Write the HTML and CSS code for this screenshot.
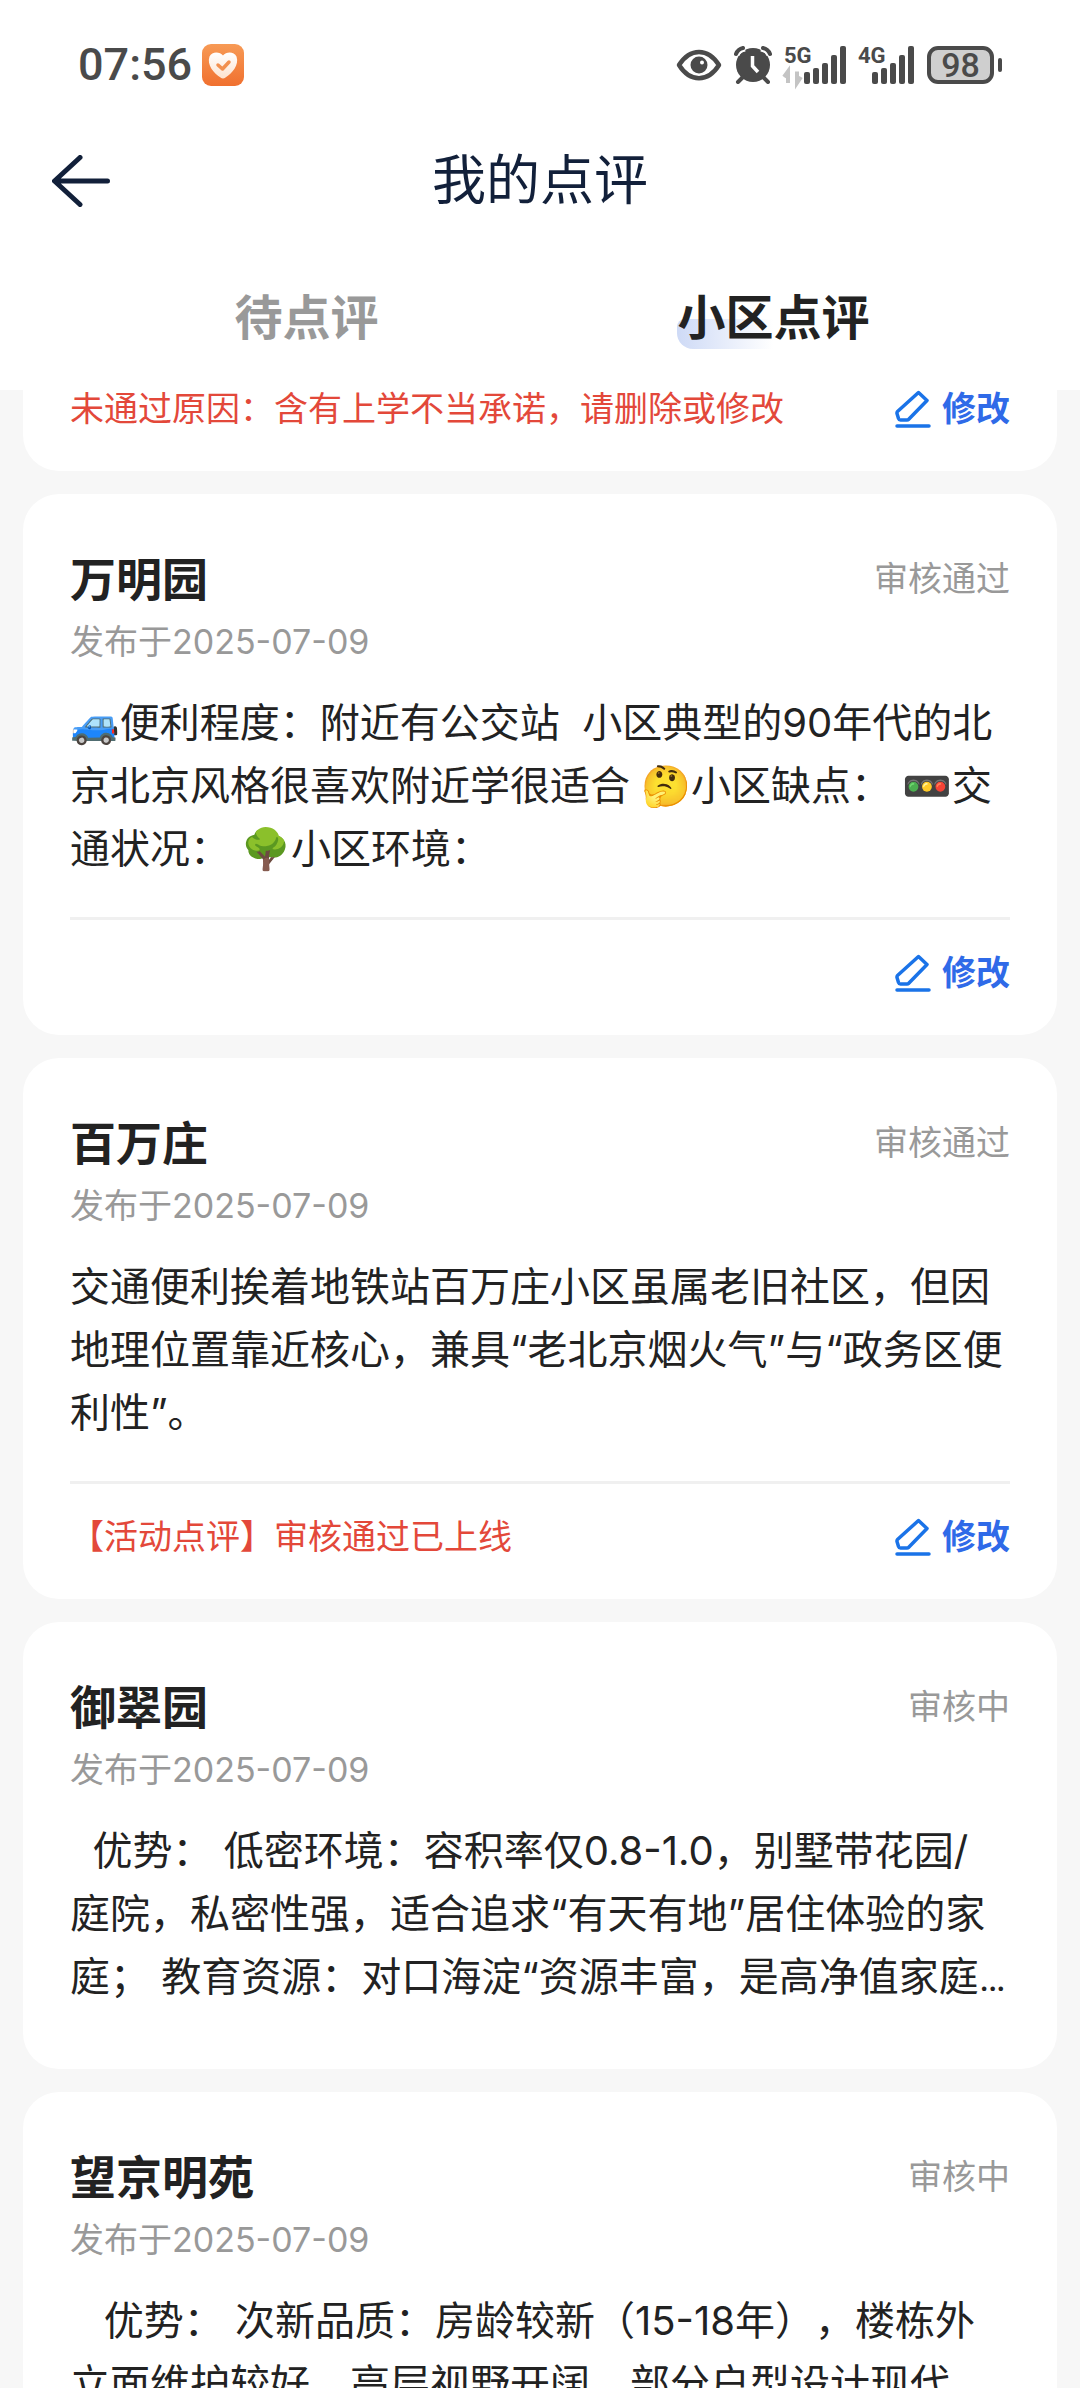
FILE: index.html
```html
<!DOCTYPE html>
<html lang="zh-CN">
<head>
<meta charset="utf-8">
<meta name="viewport" content="width=device-width, initial-scale=1">
<title>我的点评</title>
<link rel="stylesheet" href="styles.css">
</head>
<body>
<svg class="sprite" aria-hidden="true">
  <symbol id="icon-edit" viewBox="0 0 36 38">
    <path d="M23.5 2.5 L32 10.5 L13.5 29.5 Q13 30 12 30 L5.500 30 Q4 30 3.500 28.500 L2 23.500 Q1.800 22.500 2.500 21.500 Z" fill="none" stroke="#1a73e8" stroke-width="3.500" stroke-linejoin="round"/>
    <path d="M2 36 H34" stroke="#1a73e8" stroke-width="3.500" stroke-linecap="round"/>
  </symbol>
</svg>
<div class="app">
  <header class="header">
    <div class="status">
      <div class="status__left">
        <span class="status__time">07:56</span>
        <svg width="42" height="42" viewBox="0 0 42 42" aria-hidden="true">
          <defs>
            <linearGradient id="badge" x1="0" y1="0" x2="0" y2="1"><stop offset="0" stop-color="#f79a55"/><stop offset="1" stop-color="#f0702f"/></linearGradient>
            <linearGradient id="heart" x1="0" y1="0" x2="0" y2="1"><stop offset="0" stop-color="#fff"/><stop offset="1" stop-color="#fde3cf"/></linearGradient>
          </defs>
          <rect width="42" height="42" rx="9" fill="url(#badge)"/>
          <path d="M21 11.500 C18 7.500 10 7 7.500 12.500 C4.500 21 12 29.500 18.500 33.500 Q21 35.500 23.500 33.500 C30 29.500 37.500 21 34.500 12.500 C32 7 24 7.500 21 11.500 Z" fill="url(#heart)"/>
          <path d="M16 21 L20.500 25 L27 18" fill="none" stroke="#f2904f" stroke-width="3.500" stroke-linecap="round" stroke-linejoin="round"/>
        </svg>
      </div>
      <div class="status__right">
        <svg width="46" height="38" viewBox="0 0 46 38" aria-hidden="true">
          <path d="M3 19 C14 1.500 32 1.500 43 19 C32 36.500 14 36.500 3 19 Z" fill="none" stroke="#4a4a4a" stroke-width="4.500" stroke-linejoin="round"/>
          <circle cx="23" cy="19" r="8.500" fill="#4a4a4a"/>
          <circle cx="26" cy="16.500" r="2" fill="#fff"/>
        </svg>
        <svg width="38" height="38" viewBox="0 0 38 38" aria-hidden="true">
          <circle cx="19" cy="19" r="17" fill="#4a4a4a"/>
          <path d="M9 31 L4 36 M29 31 L34 36" stroke="#4a4a4a" stroke-width="4" stroke-linecap="round"/>
          <path d="M2 9 Q4 3 11 2 M36 9 Q34 3 27 2" fill="none" stroke="#fff" stroke-width="7"/>
          <path d="M2 8 Q4 3 9 2 M36 8 Q34 3 29 2" fill="none" stroke="#4a4a4a" stroke-width="4" stroke-linecap="round"/>
          <path d="M18.500 10 V20 L24 26" fill="none" stroke="#fff" stroke-width="3.500"/>
        </svg>
        <svg class="signal" width="62" height="38" viewBox="0 0 62 38" role="img" aria-label="5G">
          <text x="0" y="17" class="signal__net">5G</text>
          <path d="M0 31 L4 25.500 V37 M13 25.500 V37 L17 31" fill="none" stroke="#c4c4c4" stroke-width="4"/>
          <g fill="#4a4a4a"><rect x="20" y="26" width="6" height="12" rx="2"/><rect x="29" y="22" width="6" height="16" rx="2"/><rect x="38" y="17" width="6" height="21" rx="2"/><rect x="47" y="9" width="6" height="29" rx="2"/><rect x="56" y="0" width="6" height="38" rx="2"/></g>
        </svg>
        <svg class="signal" width="57" height="38" viewBox="0 0 57 38" role="img" aria-label="4G">
          <text x="0" y="17" class="signal__net">4G</text>
          <g fill="#4a4a4a"><rect x="14" y="26" width="6" height="12" rx="2"/><rect x="23" y="22" width="6" height="16" rx="2"/><rect x="32" y="17" width="6" height="21" rx="2"/><rect x="41" y="9" width="6" height="29" rx="2"/><rect x="50" y="0" width="6" height="38" rx="2"/></g>
        </svg>
        <span class="battery"><span class="battery__level">98</span><span class="battery__cap"></span></span>
      </div>
    </div>
    <nav class="nav">
      <button class="nav__back" type="button" aria-label="返回">
        <svg width="58" height="52" viewBox="0 0 58 52" aria-hidden="true">
          <path d="M28 2.500 L2.500 26 L28 49.500 M3 26 H55.500" fill="none" stroke="#12203a" stroke-width="5" stroke-linecap="round" stroke-linejoin="round"/>
        </svg>
      </button>
      <h1 class="nav__title">我的点评</h1>
    </nav>
    <div class="tabs" role="tablist">
      <button class="tab" type="button" role="tab" aria-selected="false"><span class="tab__label">待点评</span></button>
      <button class="tab tab--active" type="button" role="tab" aria-selected="true"><span class="tab__label">小区点评</span></button>
    </div>
  </header>

  <main class="list">
    <article class="card card--continued">
      <footer class="card__footer">
        <p class="card__note">未通过原因：含有上学不当承诺，请删除或修改</p>
        <button class="edit" type="button"><svg class="edit__icon" aria-hidden="true"><use href="#icon-edit"/></svg>修改</button>
      </footer>
    </article>

    <article class="card">
      <header class="card__head"><h2 class="card__title">万明园</h2><span class="card__status">审核通过</span></header>
      <p class="card__date">发布于2025-07-09</p>
      <p class="card__body">🚙便利程度：附近有公交站  小区典型的90年代的北京北京风格很喜欢附近学很适合 🤔小区缺点： 🚥交通状况： 🌳小区环境：</p>
      <footer class="card__footer">
        <button class="edit" type="button"><svg class="edit__icon" aria-hidden="true"><use href="#icon-edit"/></svg>修改</button>
      </footer>
    </article>

    <article class="card">
      <header class="card__head"><h2 class="card__title">百万庄</h2><span class="card__status">审核通过</span></header>
      <p class="card__date">发布于2025-07-09</p>
      <p class="card__body">交通便利挨着地铁站百万庄小区虽属老旧社区，但因地理位置靠近核心，兼具“老北京烟火气”与“政务区便利性”。</p>
      <footer class="card__footer">
        <p class="card__note">【活动点评】审核通过已上线</p>
        <button class="edit" type="button"><svg class="edit__icon" aria-hidden="true"><use href="#icon-edit"/></svg>修改</button>
      </footer>
    </article>

    <article class="card card--plain">
      <header class="card__head"><h2 class="card__title">御翠园</h2><span class="card__status">审核中</span></header>
      <p class="card__date">发布于2025-07-09</p>
      <p class="card__body">  优势： 低密环境：容积率仅0.8-1.0，别墅带花园/<br>庭院，私密性强，适合追求“有天有地”居住体验的家庭； 教育资源：对口海淀“资源丰富，是高净值家庭<span class="ellipsis">…</span></p>
    </article>

    <article class="card card--plain">
      <header class="card__head"><h2 class="card__title">望京明苑</h2><span class="card__status">审核中</span></header>
      <p class="card__date">发布于2025-07-09</p>
      <p class="card__body">   优势： 次新品质：房龄较新（15-18年），楼栋外立面维护较好，高层视野开阔，部分户型设计现代。</p>
    </article>
  </main>
</div>
</body>
</html>
```

FILE: styles.css
```css
* {
  box-sizing: border-box;
}

body {
  margin: 0;
  background: #f7f7f7;
  color: #222;
  font-family: Inter, "Noto Sans CJK SC", "Noto Color Emoji", sans-serif;
  text-spacing-trim: space-all;
}

h1, h2, p {
  margin: 0;
}

button {
  padding: 0;
  border: 0;
  background: none;
  color: inherit;
  font: inherit;
  cursor: pointer;
}

svg {
  display: block;
  flex: none;
}

.sprite {
  position: absolute;
  width: 0;
  height: 0;
}

.app {
  display: flex;
  flex-direction: column;
  height: 100vh;
  overflow: hidden;
}

.header {
  flex: none;
  background: #fff;
}

/* Status bar */
.status {
  display: flex;
  align-items: center;
  justify-content: space-between;
  height: 130px;
  padding: 0 78px;
  color: #4a4a4a;
  font-family: Roboto, sans-serif;
}

.status__left,
.status__right {
  display: flex;
  align-items: center;
}

.status__left {
  gap: 10px;
}

.status__time {
  font-size: 45px;
  font-weight: 500;
  line-height: 52px;
}

.status__right {
  gap: 12px;
}

.signal {
  overflow: visible;
}

.signal__net {
  fill: #4a4a4a;
  font-size: 22px;
  font-weight: 700;
}

.battery {
  display: flex;
  align-items: center;
  gap: 4px;
}

.battery__level {
  width: 67px;
  border: 4px solid #4a4a4a;
  border-radius: 11px;
  background: #cfcfcf;
  font-size: 34px;
  font-weight: 500;
  line-height: 30px;
  text-align: center;
}

.battery__cap {
  width: 4px;
  height: 14px;
  border-radius: 2px;
  background: #4a4a4a;
}

/* Title bar */
.nav {
  display: grid;
  grid-template-columns: 58px 1fr 58px;
  align-items: center;
  height: 102px;
  padding: 0 52px;
}

.nav__title {
  color: #12203a;
  font-size: 54px;
  font-weight: 400;
  line-height: 72px;
  text-align: center;
}

/* Tabs */
.tabs {
  display: grid;
  grid-template-columns: 1fr 1fr;
  height: 158px;
  padding: 14px 73px 0;
}

.tab {
  color: #999;
  font-size: 48px;
  font-weight: 700;
  line-height: 62px;
}

.tab--active {
  color: #222;
}

.tab__label {
  position: relative;
  z-index: 0;
}

.tab--active .tab__label::before {
  content: "";
  position: absolute;
  z-index: -1;
  bottom: -2px;
  left: 0;
  width: 50%;
  height: 30px;
  border-radius: 8px 0 0 16px;
  background: linear-gradient(90deg, #cedaf6, #fff);
}

/* Review cards */
.list {
  display: flex;
  flex: 1;
  flex-direction: column;
  gap: 23px;
  min-height: 0;
  padding: 0 23px;
  overflow-y: auto;
  scrollbar-width: none;
}

.card {
  flex: none;
  padding: 50px 47px 43px;
  border-radius: 36px;
  background: #fff;
}

.card--plain {
  padding-bottom: 60px;
}

.card--continued {
  padding-top: 0;
  border-radius: 0 0 36px 36px;
}

.card__head {
  display: flex;
  align-items: center;
  justify-content: space-between;
}

.card__title {
  font-size: 46px;
  font-weight: 700;
  line-height: 70px;
}

.card__status,
.card__date {
  color: #999;
  font-size: 34px;
  line-height: 52px;
}

.card__date {
  margin-top: 2px;
}

.card__body {
  margin-top: 23px;
  font-size: 40px;
  line-height: 63px;
  white-space: pre-wrap;
}

.ellipsis {
  font-family: Roboto, sans-serif;
}

.card__footer {
  display: flex;
  align-items: center;
  margin-top: 37px;
  padding-top: 34px;
  border-top: 3px solid #f0f0f0;
  font-size: 34px;
  line-height: 38px;
}

.card--continued .card__footer {
  margin-top: 0;
  padding-top: 0;
  border-top: 0;
}

.card__note {
  color: #e3483a;
}

.edit {
  display: flex;
  align-items: center;
  gap: 11px;
  margin-left: auto;
  color: #2f6ae8;
  font-weight: 700;
}

.edit__icon {
  width: 36px;
  height: 38px;
}
```
